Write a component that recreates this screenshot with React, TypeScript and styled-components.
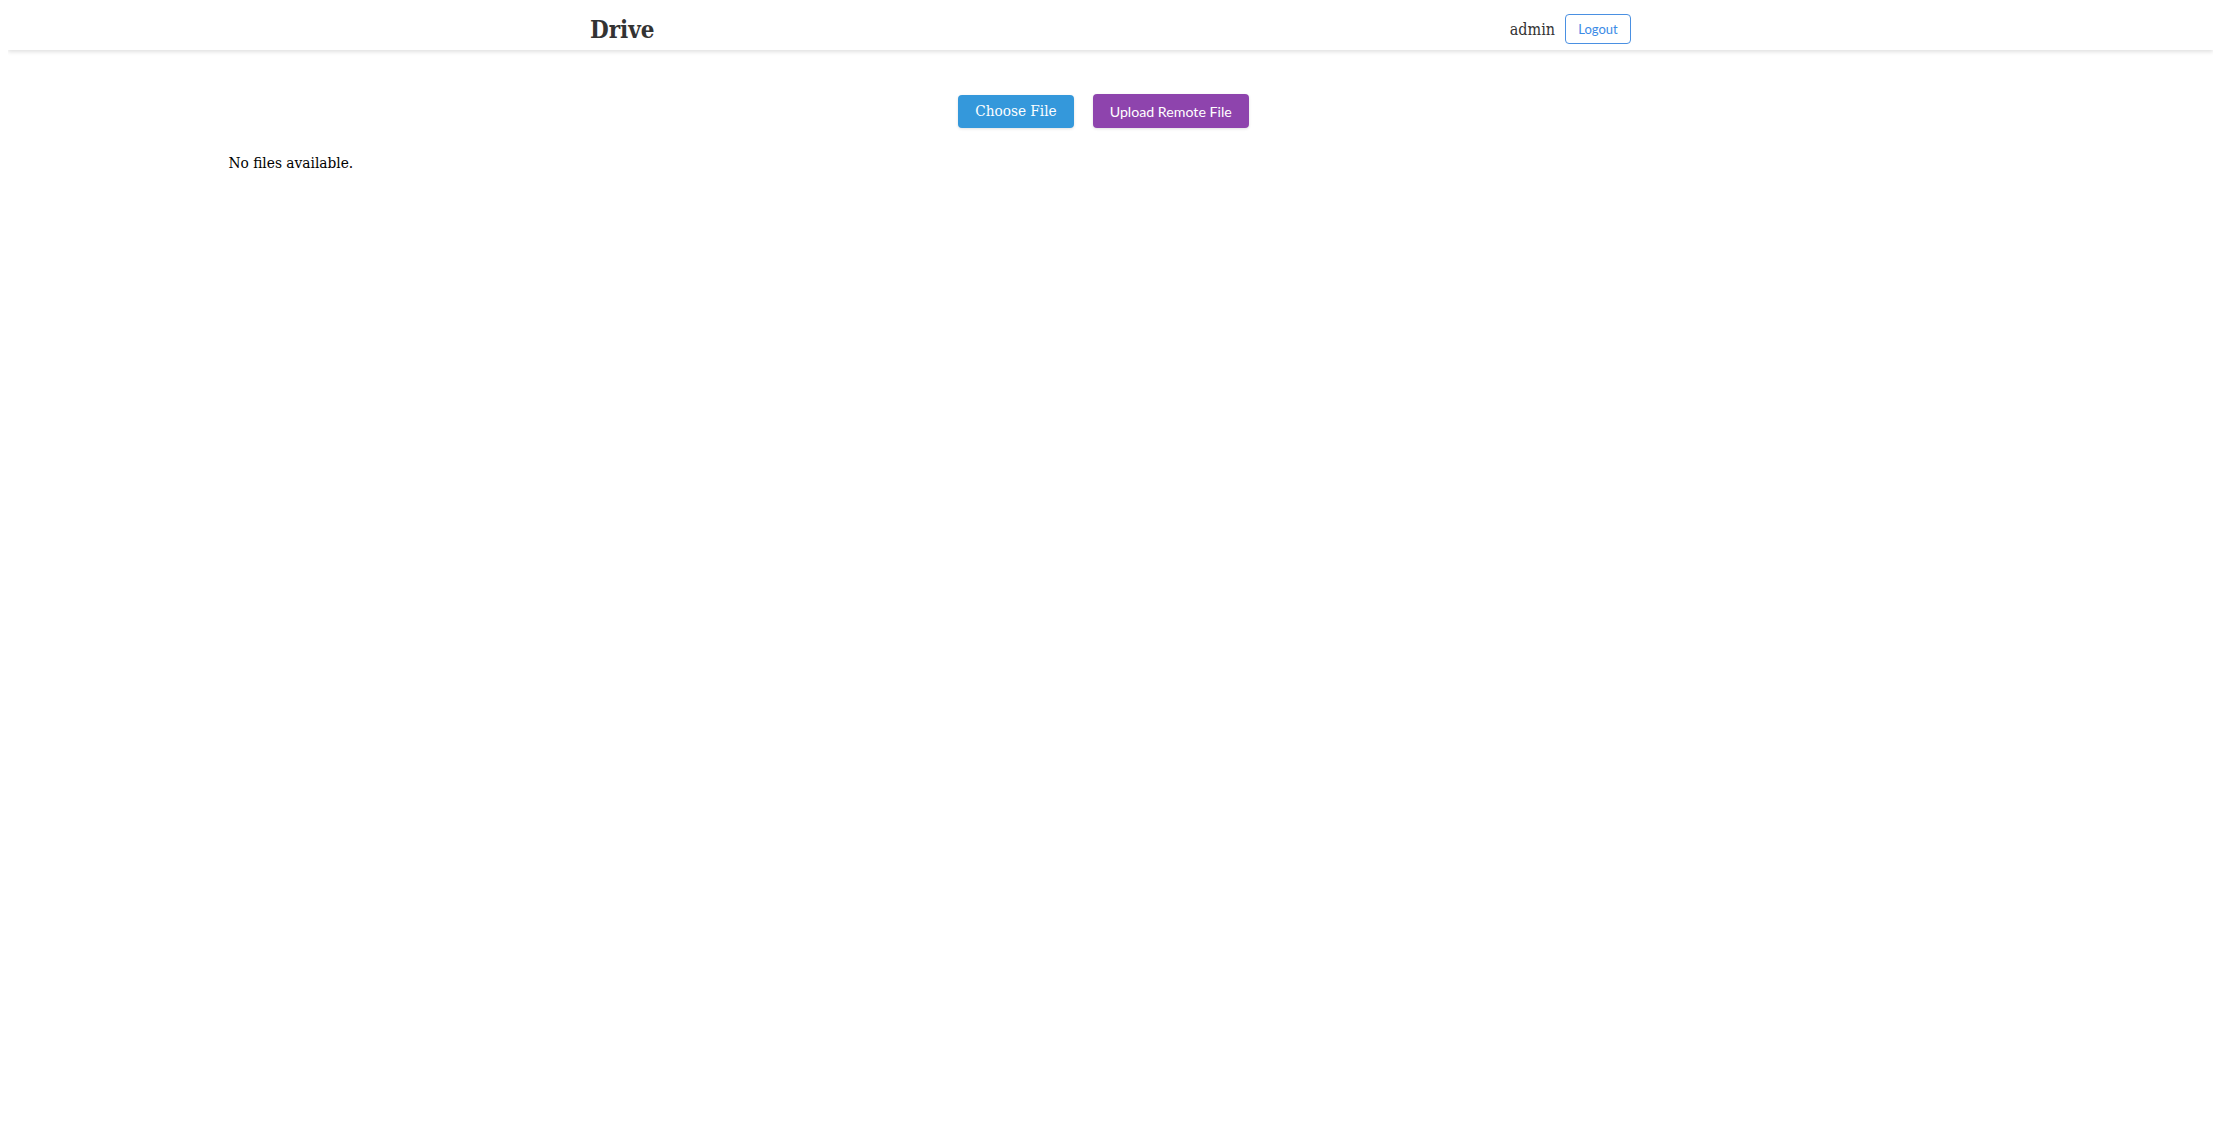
import React from "react";
import styled, { createGlobalStyle } from "styled-components";

const serif = '"DejaVu Serif Condensed", "DejaVu Serif", serif';
const sans = '"Lato", "Noto Sans", sans-serif';

const Global = createGlobalStyle`
  html, body { background: #ffffff; }
  body {
    margin: 8px;
    font-family: ${serif};
    font-stretch: condensed;
    font-size: 16px;
    color: #000;
  }
`;

const Header = styled.header`
  height: 42px;
  background: #ffffff;
  box-shadow: 0 2px 4px rgba(0, 0, 0, 0.12);
  display: flex;
  align-items: center;
`;

const HeaderInner = styled.div`
  width: 1041px;
  margin: 0 auto;
  display: flex;
  align-items: center;
  justify-content: space-between;
`;

const Brand = styled.h1`
  margin: 0;
  font-family: ${serif};
  font-stretch: condensed;
  font-size: 24px;
  font-weight: bold;
  color: #333333;
`;

const UserArea = styled.div`
  display: flex;
  align-items: center;
  gap: 10px;
`;

const UserName = styled.span`
  font-family: ${serif};
  font-stretch: condensed;
  font-size: 16px;
  color: #333333;
`;

const LogoutButton = styled.button`
  height: 30px;
  width: 66px;
  padding: 0;
  background: #ffffff;
  border: 1px solid #4a90e2;
  border-radius: 4px;
  color: #3b8be6;
  font-family: ${sans};
  font-size: 13px;
  cursor: pointer;
`;

const Main = styled.main`
  width: 80%;
  margin: 44px auto 0;
`;

const Actions = styled.div`
  display: flex;
  justify-content: center;
  align-items: center;
  gap: 19px;
  padding-right: 14px;
  margin-bottom: 26px;
`;

const ActionButton = styled.label<{ $bg: string; $sans?: boolean }>`
  display: inline-flex;
  align-items: center;
  justify-content: center;
  height: ${(p) => (p.$sans ? "34px" : "33px")};
  padding: 0 17px;
  border: none;
  border-radius: 4px;
  background: ${(p) => p.$bg};
  color: #ffffff;
  font-family: ${(p) => (p.$sans ? sans : serif)};
  font-stretch: condensed;
  font-size: ${(p) => (p.$sans ? "14.2px" : "15.2px")};
  box-shadow: 0 1px 3px rgba(0, 0, 0, 0.12);
  cursor: pointer;
  box-sizing: border-box;
`;

const HiddenInput = styled.input`
  display: none;
`;

const Empty = styled.p`
  margin: 0;
  font-size: 15.3px;
`;

export default function App() {
  return (
    <>
      <Global />
      <Header>
        <HeaderInner>
          <Brand>Drive</Brand>
          <UserArea>
            <UserName>admin</UserName>
            <LogoutButton>Logout</LogoutButton>
          </UserArea>
        </HeaderInner>
      </Header>
      <Main>
        <Actions>
          <ActionButton $bg="#3498db">
            Choose File
            <HiddenInput type="file" />
          </ActionButton>
          <ActionButton as="button" $bg="#8e44ad" $sans>
            Upload Remote File
          </ActionButton>
        </Actions>
        <Empty>No files available.</Empty>
      </Main>
    </>
  );
}
